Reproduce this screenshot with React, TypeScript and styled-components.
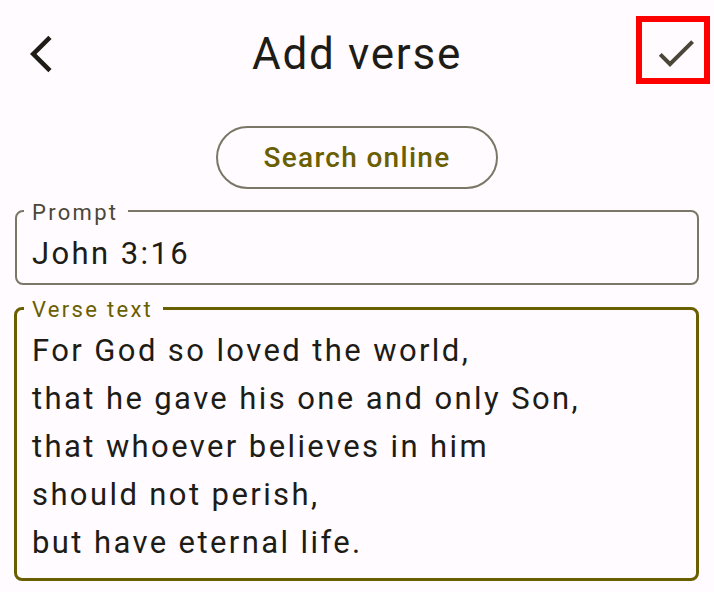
import React from "react";
import styled, { createGlobalStyle } from "styled-components";

const colors = {
  bg: "#fffbff",
  onSurface: "#1d1c16",
  onSurfaceVariant: "#4a4739",
  outline: "#7a7767",
  primary: "#6a5f00",
};

const GlobalStyle = createGlobalStyle`
  html, body {
    margin: 0;
    padding: 0;
    background: ${colors.bg};
  }
  body {
    font-family: Roboto, "Liberation Sans", sans-serif;
    color: ${colors.onSurface};
  }
`;

const Page = styled.div`
  width: 714px;
  min-height: 592px;
  display: flex;
  flex-direction: column;
  background: ${colors.bg};
`;

const AppBar = styled.header`
  height: 107px;
  display: grid;
  grid-template-columns: 1fr auto 1fr;
  align-items: center;
`;

const IconButton = styled.button`
  justify-self: start;
  margin-left: 19px;
  width: 44px;
  height: 44px;
  padding: 0;
  border: none;
  background: none;
  display: flex;
  color: ${colors.onSurface};
  svg {
    width: 44px;
    height: 44px;
    display: block;
  }
`;

const Title = styled.h1`
  margin: 0;
  font-size: 44px;
  font-weight: 400;
  line-height: 1;
  letter-spacing: 1.7px;
  color: ${colors.onSurface};
`;

const HighlightedAction = styled.button`
  justify-self: end;
  align-self: start;
  margin: 16px 4px 0 0;
  width: 74px;
  height: 68px;
  box-sizing: border-box;
  border: 6px solid #ff0000;
  background: none;
  padding: 7px 0 0 10px;
  display: flex;
  align-items: flex-start;
  justify-content: flex-start;
  color: ${colors.onSurfaceVariant};
  svg {
    width: 48px;
    height: 48px;
    flex: none;
    display: block;
  }
`;

const Body = styled.main`
  display: flex;
  flex-direction: column;
  padding: 0 15px 0 14px;
`;

const OutlinedButton = styled.button`
  align-self: center;
  margin: 19px 0 0 1px;
  width: 282px;
  height: 63px;
  box-sizing: border-box;
  border: 2px solid ${colors.outline};
  border-radius: 32px;
  background: transparent;
  color: ${colors.primary};
  font-family: Roboto, "Liberation Sans", sans-serif;
  font-size: 28px;
  font-weight: 500;
  letter-spacing: 1.3px;
  padding: 0;
`;

const Field = styled.fieldset<{ $focused?: boolean; $gap: number }>`
  margin: ${(p) => p.$gap}px 0 0 ${(p) => (p.$focused ? 0 : 1)}px;
  padding: 0 15px ${(p) => (p.$focused ? 11 : 5)}px;
  border: ${(p) =>
    p.$focused ? `3px solid ${colors.primary}` : `2px solid ${colors.outline}`};
  border-radius: 8px;
  min-width: 0;
`;

const Legend = styled.legend<{ $focused?: boolean }>`
  margin-left: -8px;
  padding: 0 10px 0 8px;
  font-size: 22px;
  line-height: 24px;
  letter-spacing: 2.3px;
  transform: translateY(2px);
  color: ${(p) => (p.$focused ? colors.primary : colors.onSurfaceVariant)};
`;

const FieldText = styled.div`
  padding-top: 7px;
  font-size: 31px;
  line-height: 48px;
  letter-spacing: 2.4px;
  color: ${colors.onSurface};
  white-space: pre-line;
`;

const BackIcon = () => (
  <svg viewBox="0 0 24 24" aria-hidden="true">
    <path
      fill="currentColor"
      d="M17.77 3.77L16 2 6 12l10 10 1.77-1.77L9.54 12z"
    />
  </svg>
);

const CheckIcon = () => (
  <svg viewBox="0 0 24 24" aria-hidden="true">
    <path
      fill="currentColor"
      d="M9 16.17L4.83 12l-1.42 1.41L9 19 21 7l-1.41-1.41z"
    />
  </svg>
);

const verse = [
  "For God so loved the world,",
  "that he gave his one and only Son,",
  "that whoever believes in him",
  "should not perish,",
  "but have eternal life.",
].join("\n");

export default function App() {
  return (
    <>
      <GlobalStyle />
      <Page>
        <AppBar>
          <IconButton aria-label="Back">
            <BackIcon />
          </IconButton>
          <Title>Add verse</Title>
          <HighlightedAction aria-label="Save">
            <CheckIcon />
          </HighlightedAction>
        </AppBar>
        <Body>
          <OutlinedButton>Search online</OutlinedButton>
          <Field $gap={10}>
            <Legend>Prompt</Legend>
            <FieldText>John 3:16</FieldText>
          </Field>
          <Field $focused $gap={11}>
            <Legend $focused>Verse text</Legend>
            <FieldText>{verse}</FieldText>
          </Field>
        </Body>
      </Page>
    </>
  );
}
